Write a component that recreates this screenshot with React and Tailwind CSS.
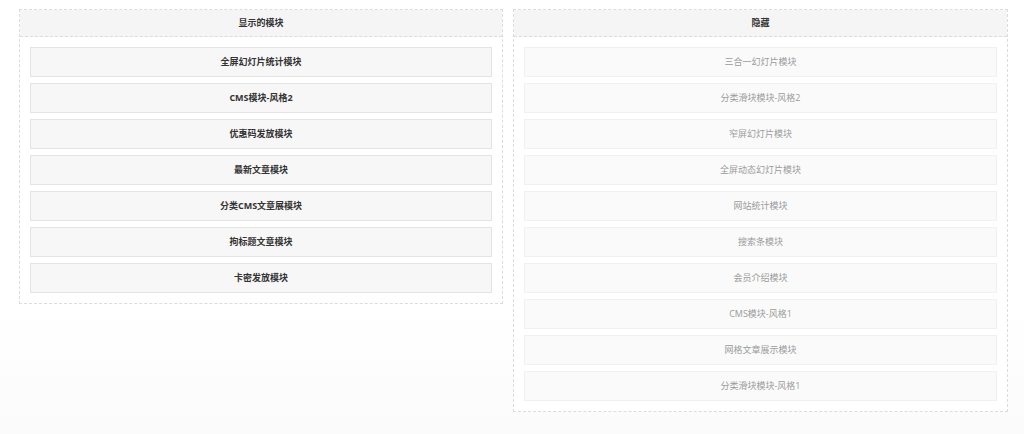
import React from "react";

const shown = ["全屏幻灯片统计模块", "CMS模块-风格2", "优惠码发放模块", "最新文章模块", "分类CMS文章展模块", "拘标题文章模块", "卡密发放模块"];
const hidden = ["三合一幻灯片模块", "分类滑块模块-风格2", "窄屏幻灯片模块", "全屏动态幻灯片模块", "网站统计模块", "搜索条模块", "会员介绍模块", "CMS模块-风格1", "网格文章展示模块", "分类滑块模块-风格1"];

function Panel({ title, items, width, muted }) {
  return (
    <div className={`${width} border border-dashed border-[#dcdcdc] bg-white`}>
      <div className="h-[27px] bg-[#f5f5f5] border-b border-dashed border-[#dcdcdc] flex items-center justify-center text-[9px] font-bold text-[#333]">
        {title}
      </div>
      <div className="flex flex-col gap-[6px] p-[10px]">
        {items.map((t) => (
          <div
            key={t}
            className={
              muted
                ? "h-[30px] border border-[#f0f0f0] bg-[#fafafa] flex items-center justify-center text-[9px] text-[#9a9a9a]"
                : "h-[30px] border border-[#e4e4e4] bg-[#f7f7f7] flex items-center justify-center text-[9px] font-bold text-[#333]"
            }
          >
            {t}
          </div>
        ))}
      </div>
    </div>
  );
}

export default function App() {
  return (
    <div
      className="w-[1024px] h-[434px] bg-gradient-to-b from-white from-70% to-[#fbfbfb] flex items-start gap-[10px] pt-[9px] pl-[19px]"
      style={{ fontFamily: '"Open Sans", "Noto Sans CJK SC", sans-serif' }}
    >
      <Panel title="显示的模块" items={shown} width="w-[484px]" />
      <Panel title="隐藏" items={hidden} width="w-[495px]" muted />
    </div>
  );
}
